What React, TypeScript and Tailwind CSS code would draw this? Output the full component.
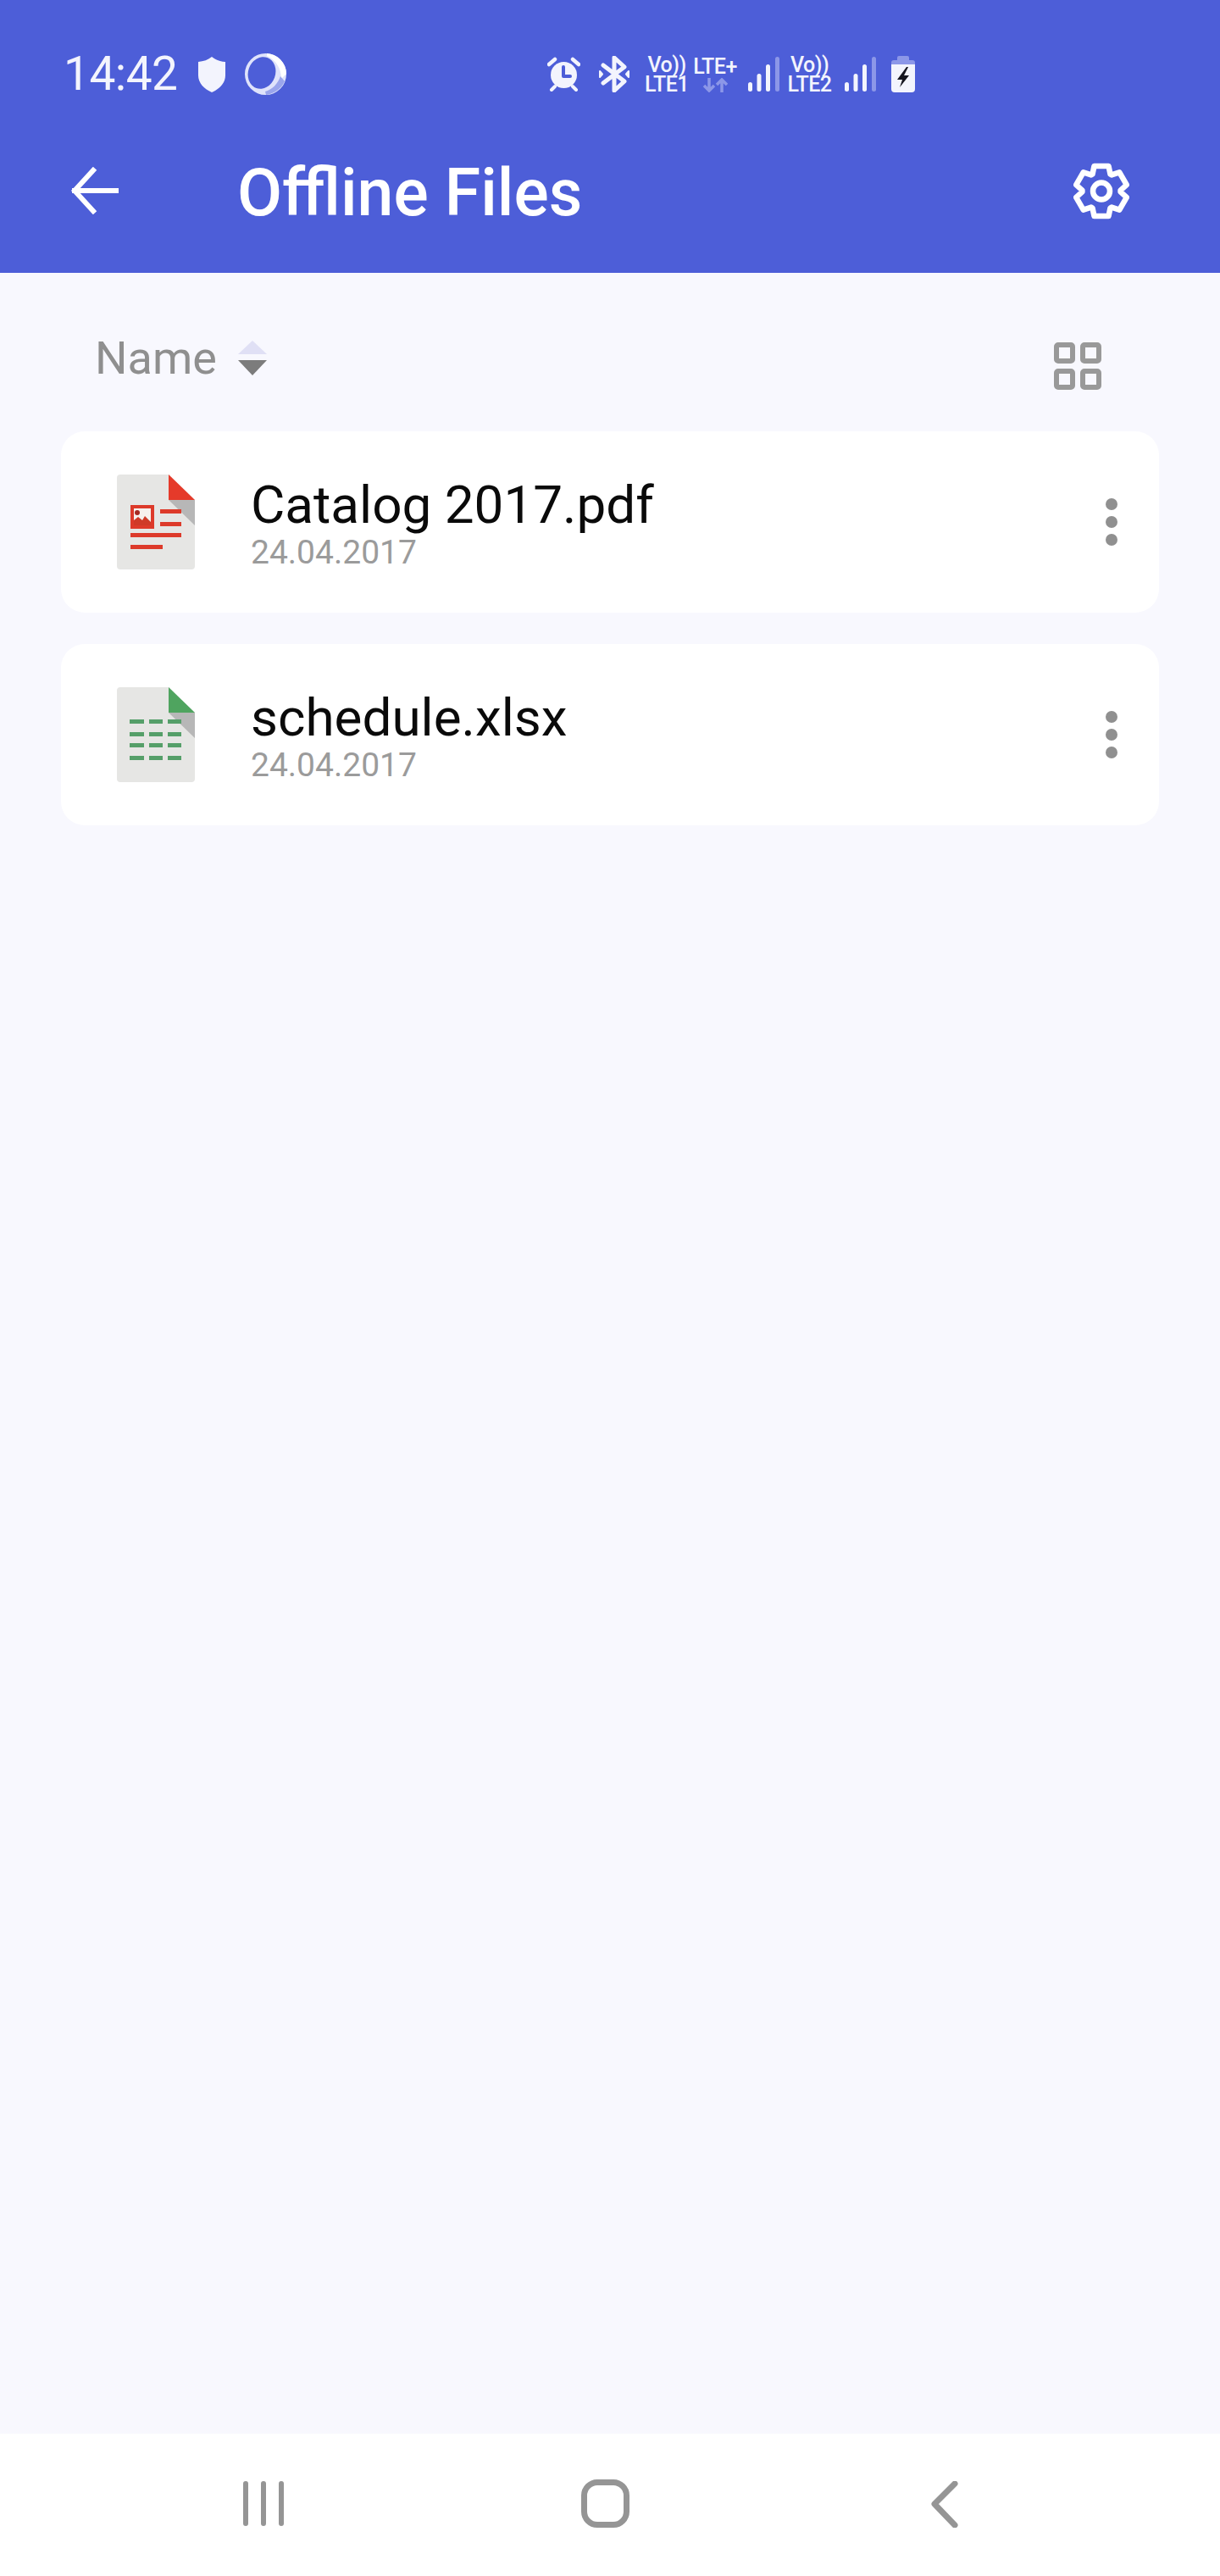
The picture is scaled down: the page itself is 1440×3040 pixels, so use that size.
import React from "react";

// Six-toothed cog outline used by the settings button
function cogPath(): string {
  const parts: string[] = [];
  for (let k = 0; k < 6; k++) {
    const a = (Math.PI / 3) * k - Math.PI / 2;
    const c = Math.cos(a);
    const s = Math.sin(a);
    const pts: [number, number][] = [
      [20, -10.5],
      [29.5, -8.5],
      [29.5, 8.5],
      [20, 10.5],
    ];
    for (const [u, v] of pts) {
      const x = 33 + u * c - v * s;
      const y = 33.5 + u * s + v * c;
      parts.push(`${parts.length === 0 ? "M" : "L"}${x.toFixed(2)} ${y.toFixed(2)}`);
    }
  }
  return parts.join(" ") + " Z";
}

function Cog() {
  return (
    <svg width="66" height="67" viewBox="0 0 66 67" fill="none" stroke="white" strokeWidth="6.5" strokeLinejoin="round">
      <path d={cogPath()} />
      <circle cx="33" cy="33.5" r="10" />
    </svg>
  );
}

function BackArrow() {
  return (
    <svg width="56" height="56" viewBox="0 0 56 56" fill="none" stroke="white" strokeWidth="6" strokeLinecap="square" strokeLinejoin="miter">
      <path d="M4 28 H53" />
      <path d="M26 4 L4 28 L26 52" />
    </svg>
  );
}

function Shield() {
  return (
    <svg width="32" height="42" viewBox="0 0 32 42">
      <path d="M16 0 C20 3.5 26 5.5 32 6 V22 C32 31 25 38 16 42 C7 38 0 31 0 22 V6 C6 5.5 12 3.5 16 0 Z" fill="#f3f4fd" />
    </svg>
  );
}

function Swirl() {
  return (
    <svg width="49" height="49" viewBox="0 0 49 49">
      <path
        fillRule="evenodd"
        d="M24.5 0 A24.5 24.5 0 1 1 24.5 49 A24.5 24.5 0 1 1 24.5 0 Z M26.5 5.1 A19 16 -70 1 0 13.5 40.9 A19 16 -70 1 0 26.5 5.1 Z"
        fill="#dfe3fb"
      />
      <path d="M26 0 A24.5 24.5 0 0 1 49 24 L43 30 C43 18 37 8 26 3 Z" fill="#ffffff" />
      <path d="M42 27 L47 33 C43 42 34 48 25 49 L24 45 C32 43 39 36 42 27 Z" fill="#9aa5ec" />
    </svg>
  );
}

function Alarm() {
  return (
    <svg width="39" height="41" viewBox="0 0 39 41" fill="none">
      <circle cx="19.5" cy="21.5" r="15.5" fill="#f3f4fd" />
      <path d="M9 35 L5 39 M30 35 L34 39" stroke="#f3f4fd" strokeWidth="4" strokeLinecap="round" />
      <path d="M2 9 L9 3 M37 9 L30 3" stroke="#f3f4fd" strokeWidth="4.5" strokeLinecap="round" />
      <path d="M19 12 V23 H27" stroke="#4d5ed8" strokeWidth="4" strokeLinecap="round" strokeLinejoin="round" />
    </svg>
  );
}

function BluetoothPlus() {
  return (
    <svg width="36" height="43" viewBox="0 0 36 43" fill="none" stroke="#f3f4fd" strokeWidth="5" strokeLinejoin="round" strokeLinecap="round">
      <path d="M5 11 L30 30 L18 41 V2 L30 13 L5 32" />
      <path d="M1 18 L4 21.5 L1 25 Z" fill="#f3f4fd" strokeWidth="2" />
      <path d="M35 18 L32 21.5 L35 25 Z" fill="#f3f4fd" strokeWidth="2" />
    </svg>
  );
}

function TransferArrows() {
  return (
    <svg width="30" height="17" viewBox="0 0 30 17" fill="none" stroke="#8c97e8" strokeWidth="3.5">
      <path d="M8 0 V15 M2 9 L8 15 L14 9" />
      <path d="M23 17 V2 M17 8 L23 2 L29 8" />
    </svg>
  );
}

function Signal() {
  return (
    <svg width="37" height="41" viewBox="0 0 37 41">
      <rect x="0" y="30" width="5" height="11" rx="2.5" fill="#f3f4fd" />
      <rect x="10.5" y="20" width="5" height="21" rx="2.5" fill="#f3f4fd" />
      <rect x="21" y="9" width="5" height="32" rx="2.5" fill="#f3f4fd" />
      <rect x="32" y="0" width="5" height="41" rx="2.5" fill="#8c97e8" />
    </svg>
  );
}

function Battery() {
  return (
    <svg width="28" height="43" viewBox="0 0 28 43">
      <path d="M9 0 H19 A2 2 0 0 1 21 2 V5 H25 A3 3 0 0 1 28 8 V11 H0 V8 A3 3 0 0 1 3 5 H7 V2 A2 2 0 0 1 9 0 Z" fill="#8c97e8" />
      <path d="M0 10 H28 V39 A4 4 0 0 1 24 43 H4 A4 4 0 0 1 0 39 Z" fill="#f3f4fd" />
      <path d="M18 13 L7 28 H13 L10 37 L21 23 H15 L20 13 Z" fill="#15151f" />
    </svg>
  );
}

function PdfIcon() {
  return (
    <svg width="92" height="112" viewBox="0 0 92 112" className="shrink-0">
      <path d="M4 0 H61 L92 30 V108 A4 4 0 0 1 88 112 H4 A4 4 0 0 1 0 108 V4 A4 4 0 0 1 4 0 Z" fill="#e6e6e4" />
      <path d="M61 0 L92 30 H61 Z" fill="#e53a2a" />
      <path d="M61 30 H92 V60 Z" fill="#b7b7b7" />
      <rect x="16" y="36" width="28" height="28" fill="#dd3a2a" />
      <rect x="20" y="40" width="20" height="17" fill="#f6f1ee" />
      <circle cx="24" cy="45" r="3" fill="#a52a22" />
      <path d="M20 59 V54 L25 50 L30 54 L33 49 L40 56 V60 H20 Z" fill="#cf3a28" />
      <path d="M51 41 H76 V46 H51 Z M51 56 H76 V61 H51 Z M16 69 H76 V74 H16 Z M16 83 H54 V88 H16 Z" fill="#dd3a2a" />
    </svg>
  );
}

function SheetIcon() {
  const rows = [38, 53, 66, 81];
  const cols = [
    [15, 17],
    [38, 16],
    [60, 16],
  ];
  return (
    <svg width="92" height="112" viewBox="0 0 92 112" className="shrink-0">
      <path d="M4 0 H61 L92 30 V108 A4 4 0 0 1 88 112 H4 A4 4 0 0 1 0 108 V4 A4 4 0 0 1 4 0 Z" fill="#e6e6e4" />
      <path d="M61 0 L92 30 H61 Z" fill="#4fa45f" />
      <path d="M61 30 H92 V60 Z" fill="#b7b7b7" />
      {rows.map((y) =>
        cols.map(([x, w]) => <rect key={`${x}-${y}`} x={x} y={y} width={w} height="5" fill="#559f69" />)
      )}
    </svg>
  );
}

function FileRow({ name, icon }: { name: string; icon: React.ReactNode }) {
  return (
    <div className="flex h-[214px] items-start rounded-[28px] bg-white pl-[66px] pt-[51px]">
      {icon}
      <div className="ml-[66px] flex flex-col">
        <span className="mt-[6px] text-[62px] leading-[60px] text-[#0a0a0a]">{name}</span>
        <span className="mt-[4px] text-[39px] leading-[44px] text-[#9b9b9b]">24.04.2017</span>
      </div>
      <div className="ml-auto mr-[49px] mt-[28px] flex flex-col gap-[7px]">
        <span className="size-[14px] rounded-full bg-[#909090]" />
        <span className="size-[14px] rounded-full bg-[#909090]" />
        <span className="size-[14px] rounded-full bg-[#909090]" />
      </div>
    </div>
  );
}

export default function App() {
  return (
    <div className="flex h-[3040px] w-[1440px] flex-col bg-[#f8f8fe] font-['Roboto',sans-serif]">
      <header className="flex h-[322px] shrink-0 flex-col bg-[#4d5ed8] text-white">
        {/* status bar */}
        <div className="mt-[63px] flex h-[49px] items-center pl-[75px] text-[#f3f4fd]">
          <span className="w-[133px] text-[55px] font-normal leading-none tracking-[-0.5px]">14:42</span>
          <span className="ml-[26px] flex"><Shield /></span>
          <span className="ml-[23px] flex"><Swirl /></span>
          <span className="ml-[308px] flex"><Alarm /></span>
          <span className="ml-[22px] flex"><BluetoothPlus /></span>
          <div className="ml-[18px] flex w-[52px] flex-col items-center text-[25px] font-medium leading-[23px]">
            <span className="tracking-[-0.5px]">Vo))</span>
            <span className="tracking-[-0.5px]">LTE1</span>
          </div>
          <div className="ml-[5px] flex w-[52px] flex-col items-center text-[25px] font-medium leading-[23px]">
            <span className="tracking-[-0.5px]">LTE+</span>
            <span className="mt-[2px] flex"><TransferArrows /></span>
          </div>
          <span className="ml-[13px] flex"><Signal /></span>
          <div className="ml-[9px] flex w-[53px] flex-col items-center text-[25px] font-medium leading-[23px]">
            <span className="tracking-[-0.5px]">Vo))</span>
            <span className="tracking-[-0.5px]">LTE2</span>
          </div>
          <span className="ml-[15px] flex"><Signal /></span>
          <span className="ml-[18px] flex"><Battery /></span>
        </div>
        {/* app bar */}
        <div className="mt-[65px] flex h-[96px] items-center pl-[84px] pr-[107px]">
          <BackArrow />
          <h1 className="ml-[140px] mt-[7px] text-[77px] font-medium leading-none">Offline Files</h1>
          <span className="ml-auto flex"><Cog /></span>
        </div>
      </header>

      <main className="flex flex-1 flex-col px-[72px]">
        <div className="flex h-[187px] shrink-0 items-start justify-between pl-[40px] pr-[68px] pt-[69px]">
          <div className="flex items-center">
            <span className="text-[54px] leading-[64px] text-[#8f8f8f]">Name</span>
            <svg width="36" height="42" viewBox="0 0 36 42" className="ml-[24px]">
              <path d="M18 0 L35 16 H1 Z" fill="#e0e0f5" />
              <path d="M1 23 H35 L18 41 Z" fill="#7c7c7c" />
            </svg>
          </div>
          <div className="mt-[13px] grid grid-cols-2 gap-[6px]">
            <span className="size-[25px] rounded-[5px] border-[6px] border-[#999999]" />
            <span className="size-[25px] rounded-[5px] border-[6px] border-[#999999]" />
            <span className="size-[25px] rounded-[5px] border-[6px] border-[#999999]" />
            <span className="size-[25px] rounded-[5px] border-[6px] border-[#999999]" />
          </div>
        </div>
        <div className="flex flex-col gap-[37px]">
          <FileRow name="Catalog 2017.pdf" icon={<PdfIcon />} />
          <FileRow name="schedule.xlsx" icon={<SheetIcon />} />
        </div>
      </main>

      <nav className="relative flex h-[168px] shrink-0 items-start bg-white pt-[56px]">
        <div className="ml-[287px] flex gap-[15px]">
          <span className="h-[53px] w-[6px] rounded-full bg-[#959595]" />
          <span className="h-[53px] w-[6px] rounded-full bg-[#959595]" />
          <span className="h-[53px] w-[6px] rounded-full bg-[#959595]" />
        </div>
        <span className="ml-[351px] mt-[-2px] h-[57px] w-[57px] rounded-[19px] border-[7px] border-[#959595]" />
        <svg width="34" height="55" viewBox="0 0 34 55" fill="none" stroke="#959595" strokeWidth="7" strokeLinecap="round" strokeLinejoin="round" className="ml-[355px]">
          <path d="M29 3 L5 27 L29 52" />
        </svg>
      </nav>
    </div>
  );
}
